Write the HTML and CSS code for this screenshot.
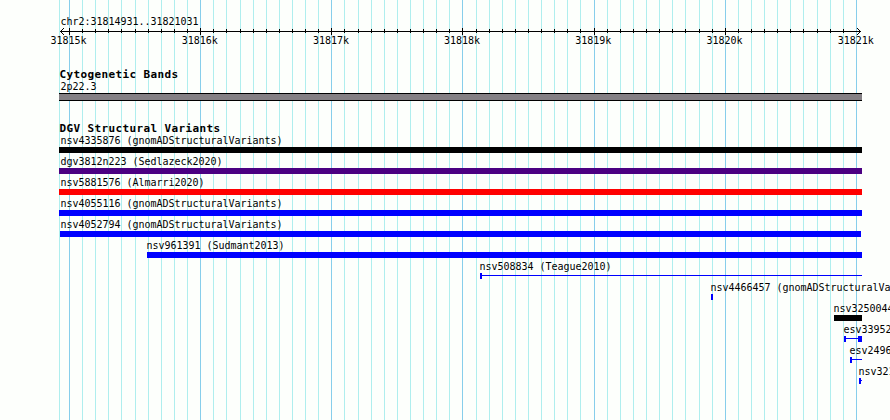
FILE: index.html
```html
<!DOCTYPE html>
<html lang="en">
<head>
    <meta charset="UTF-8">
    <title>chr2:31814931..31821031</title>
    <link rel="stylesheet" href="styles.css">
</head>
<body>
    <div class="browser">
        <svg class="grid" id="grid" width="890" height="420" shape-rendering="crispEdges"></svg>

        <div class="region">chr2:31814931..31821031</div>
        <svg class="ruler" id="ruler" width="890" height="10" shape-rendering="crispEdges"></svg>
        <div class="scale">
            <span>31815k</span>
            <span>31816k</span>
            <span>31817k</span>
            <span>31818k</span>
            <span>31819k</span>
            <span>31820k</span>
            <span>31821k</span>
        </div>

        <h2 class="track-title">Cytogenetic Bands</h2>
        <div class="band-label">2p22.3</div>
        <div class="band"></div>

        <h2 class="track-title variants-title">DGV Structural Variants</h2>
        <div id="variants"></div>
    </div>

    <script>
        const STEP = 800 / 61;
        const FIRST = 69.515;

        // label, label x, color, list of [x, width, type]
        const variants = [
            ['nsv4335876 (gnomADStructuralVariants)', 60.5, 'black', [[59, 803]]],
            ['dgv3812n223 (Sedlazeck2020)', 60.5, 'indigo', [[59, 803]]],
            ['nsv5881576 (Almarri2020)', 60.5, 'red', [[59, 803]]],
            ['nsv4055116 (gnomADStructuralVariants)', 60.5, 'blue', [[59, 803]]],
            ['nsv4052794 (gnomADStructuralVariants)', 60.5, 'blue', [[60, 801]]],
            ['nsv961391 (Sudmant2013)', 146.5, 'blue', [[147, 715]]],
            ['nsv508834 (Teague2010)', 479.5, 'blue', [[480, 2], [482, 380, 'thin']]],
            ['nsv4466457 (gnomADStructuralVa', 710.5, 'blue', [[711, 2]]],
            ['nsv3250044', 833.5, 'black', [[834, 28]]],
            ['esv33952', 843.5, 'blue', [[844, 2], [846, 12, 'thin'], [858, 4]]],
            ['esv24966', 849.5, 'blue', [[850, 2], [852, 10, 'thin']]],
            ['nsv321', 858.5, 'blue', [[859, 2], [861, 1, 'thin']]]
        ];

        let grid = '<rect class="minor" x="59" y="0" width="1" height="420"/>';
        let ruler = '<rect x="60" y="5" width="801" height="1"/>';
        for (let i = 0; i <= 60; i++) {
            const x = Math.floor(FIRST + i * STEP);
            const major = i % 10 === 0;
            grid += `<rect class="${major ? 'major' : 'minor'}" x="${x}" y="0" width="1" height="420"/>`;
            // the last tick is left to the arrow head
            if (i < 60) {
                ruler += `<rect x="${x}" y="${major ? 2 : 3}" width="1" height="${major ? 7 : 4}"/>`;
            }
        }
        // arrow heads
        for (let i = 1; i <= 3; i++) {
            ruler += `<rect x="${60 + i}" y="${5 - i}" width="1" height="1"/><rect x="${60 + i}" y="${5 + i}" width="1" height="1"/>`;
            ruler += `<rect x="${860 - i}" y="${5 - i}" width="1" height="1"/><rect x="${860 - i}" y="${5 + i}" width="1" height="1"/>`;
        }
        document.getElementById('grid').innerHTML = grid;
        document.getElementById('ruler').innerHTML = ruler;

        document.getElementById('variants').innerHTML = variants.map(([name, x, color, parts]) => `
            <div class="variant">
                <div class="variant-label" style="padding-left: ${x}px">${name}</div>
                <svg class="glyph ${color}" width="890" height="6" shape-rendering="crispEdges">
                    ${parts.map(([px, w, thin]) => `<rect x="${px}" y="${thin ? 2 : 0}" width="${w}" height="${thin ? 1 : 6}"/>`).join('')}
                </svg>
            </div>
        `).join('');
    </script>
</body>
</html>
```
FILE: styles.css
```css
* {
    margin: 0;
    padding: 0;
    box-sizing: border-box;
}
body {
    font-family: "DejaVu Sans Mono", monospace;
    font-size: 10px;
    letter-spacing: -0.02px;
    background: #fdfffc;
    color: #000;
    overflow: hidden;
}
.browser {
    position: relative;
    width: 890px;
    height: 420px;
    overflow: hidden;
    white-space: nowrap;
}
svg {
    display: block;
}
.grid {
    position: absolute;
    top: 0;
    left: 0;
    z-index: -1;
}
.minor {
    fill: #afeeee;
}
.major {
    fill: #87ceeb;
}
.region {
    height: 26px;
    padding: 15px 0 0 60.5px;
    line-height: 13px;
}
.scale {
    display: flex;
    gap: 95.2px;
    height: 40px;
    padding-left: 50.5px;
    line-height: 9px;
}
.scale span {
    width: 36px;
}
.track-title {
    height: 14px;
    padding-left: 59.5px;
    font-size: 11px;
    font-weight: bold;
    line-height: 16px;
    letter-spacing: 0.378px;
    margin-top: -9px;
}
.band-label {
    height: 12px;
    padding-left: 60.5px;
    line-height: 12px;
}
.band {
    width: 803px;
    height: 8px;
    margin-left: 59px;
    background: #848084;
    border-top: 1px solid #000;
    border-bottom: 1px solid #000;
}
.variants-title {
    margin-top: 20px;
    height: 11px;
}
.variant-label {
    height: 15px;
    line-height: 17px;
}
.black {
    fill: #000;
}
.indigo {
    fill: #4b0082;
}
.red {
    fill: #f00;
}
.blue {
    fill: #00f;
}
```
